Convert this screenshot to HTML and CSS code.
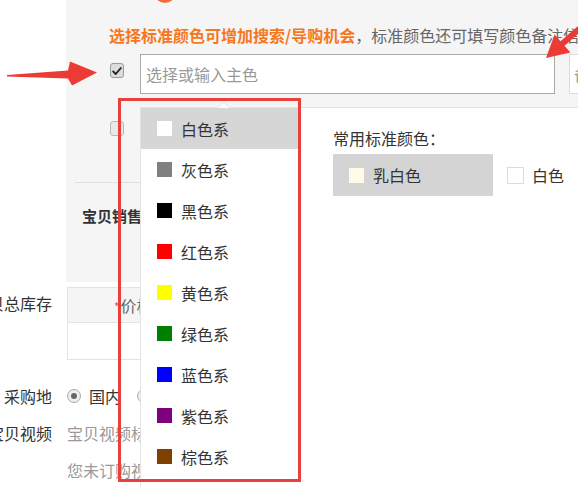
FILE: index.html
```html
<!DOCTYPE html>
<html lang="zh-CN">
<head>
<meta charset="utf-8">
<title>颜色选择</title>
<link rel="stylesheet" href="styles.css">
</head>
<body>
<div class="page">
  <div class="row">
    <div class="label"></div>
    <div class="panel">
      <p class="hint"><b>选择标准颜色可增加搜索/导购机会</b>，标准颜色还可填写颜色备注信息（偏深、偏亮等）</p>
      <div class="color-row">
        <span class="cb cb-on"><svg viewBox="0 0 14 14" width="12" height="12"><path d="M2.5 7.5 L5.5 10.5 L11.5 3.5" fill="none" stroke="#222" stroke-width="2.2" stroke-linecap="round" stroke-linejoin="round"/></svg></span>
        <div class="input main-input">选择或输入主色</div>
        <div class="input note-input">备注（如：偏深、偏浅等）</div>
      </div>
      <div class="color-row second">
        <span class="cb"></span>
      </div>
      <div class="divider"></div>
      <div class="sale-title">宝贝销售规格</div>
    </div>
  </div>

  <div class="row row-table">
    <div class="label"><span>宝贝总库存</span></div>
    <div class="table">
      <div class="thead"><span class="req">*</span>价格（元）</div>
      <div class="tbody"></div>
    </div>
  </div>

  <div class="row row-radio">
    <div class="label"><span>采购地</span></div>
    <div class="radios">
      <span class="radio on"></span><span class="radio-text">国内</span>
      <span class="radio second-radio"></span><span class="radio-text">海外及港澳台</span>
    </div>
  </div>

  <div class="row row-video">
    <div class="label"><span>宝贝视频</span></div>
    <div class="muted">宝贝视频标准：时长≤60秒</div>
  </div>
  <div class="row row-video">
    <div class="label"></div>
    <div class="muted">您未订购视频服务</div>
  </div>

  <span class="step-dot"></span>

  <div class="popup">
    <ul class="family-list">
      <li class="family active"><span class="sw" style="background:#ffffff"></span>白色系</li>
      <li class="family"><span class="sw" style="background:#808080"></span>灰色系</li>
      <li class="family"><span class="sw" style="background:#000000"></span>黑色系</li>
      <li class="family"><span class="sw" style="background:#ff0000"></span>红色系</li>
      <li class="family"><span class="sw" style="background:#ffff00"></span>黄色系</li>
      <li class="family"><span class="sw" style="background:#008000"></span>绿色系</li>
      <li class="family"><span class="sw" style="background:#0000ff"></span>蓝色系</li>
      <li class="family"><span class="sw" style="background:#800080"></span>紫色系</li>
      <li class="family"><span class="sw" style="background:#804000"></span>棕色系</li>
    </ul>
    <div class="std-panel">
      <div class="std-title">常用标准颜色：</div>
      <div class="std-options">
        <div class="std-opt selected"><span class="sw" style="background:#fffbe9"></span>乳白色</div>
        <div class="std-opt"><span class="sw sw-border" style="background:#ffffff"></span>白色</div>
      </div>
    </div>
  </div>

  <div class="redbox"></div>

  <svg class="arrows" viewBox="0 0 578 487" width="578" height="487">
    <polygon points="7,75 68,70.5 70,61.5 97,72.5 72,85.5 68,78.5 7,76.5" fill="#ec3a35"/>
    <polygon points="546,58 554.6,34.5 560.5,41.2 583,21.5 587,26 564.5,45.7 570.4,52.5" fill="#ec3a35"/>
  </svg>
</div>
</body>
</html>
```

FILE: styles.css
```css
* { box-sizing: border-box; }
html, body { margin: 0; padding: 0; }
body {
  width: 578px;
  height: 487px;
  overflow: hidden;
  background: #fff;
  font-family: "Noto Sans CJK SC", "Noto Sans", sans-serif;
  font-size: 16px;
  color: #333;
}
.page { position: relative; width: 578px; height: 487px; overflow: hidden; }

.row { display: flex; align-items: flex-start; gap: 14px; white-space: nowrap; }
.label {
  width: 52px;
  flex: none;
  display: flex;
  justify-content: flex-end;
  overflow: hidden;
  line-height: 20px;
  color: #333;
}
.label span { flex: none; }

/* grey panel */
.panel {
  flex: 1;
  min-width: 0;
  height: 282px;
  background: #f5f5f5;
  overflow: hidden;
}
.hint { margin: 25px 0 0 43px; line-height: 20px; color: #666; }
.hint b { color: #f5781f; }
.color-row { display: flex; margin: 9px 0 0 44px; height: 40px; }
.color-row > * { flex: none; }
.cb {
  width: 14px;
  height: 15px;
  margin-top: 9px;
  border: 1px solid #a9a9a9;
  border-radius: 3px;
  background: #e4e4e4;
  display: flex;
  align-items: center;
  justify-content: center;
}
.cb-on { background: #dcdcdc; border-color: #9a9a9a; }
.input {
  height: 40px;
  border: 1px solid #a9a9a9;
  background: #fff;
  line-height: 38px;
  padding-left: 5px;
  color: #999;
}
.main-input { width: 415px; margin-left: 16px; }
.note-input { width: 220px; margin-left: 14px; border-color: #dcdcdc; padding-left: 4px; }
.second { margin-top: 27px; height: 15px; }
.second .cb { margin-top: 0; background: #e8e8e8; border-color: #b8b8b8; }
.divider { margin: 46px 0 0 9px; height: 1px; background: #e0e0e0; }
.sale-title { margin: 23px 0 0 16px; line-height: 20px; font-size: 15px; font-weight: bold; color: #333; }

/* table */
.row-table { margin-top: 5px; }
.row-table .label { line-height: 32px; }
.table { flex: none; margin-left: 1px; width: 320px; border: 1px solid #e3e3e3; }
.thead {
  height: 35px;
  line-height: 34px;
  background: #f5f5f5;
  border-bottom: 1px solid #e3e3e3;
  padding-left: 46px;
  color: #666;
}
.req { color: #f2542d; font-size: 12px; margin-right: 1px; }
.tbody { height: 36px; background: #fff; }

/* radios */
.row-radio { margin-top: 26px; }
.radios { display: flex; align-items: center; height: 20px; margin-left: 1px; }
.radio {
  flex: none;
  width: 14px;
  height: 14px;
  border: 1px solid #aaa;
  border-radius: 50%;
  background: #eee;
  display: flex;
  align-items: center;
  justify-content: center;
}
.radio.on::after { content: ""; width: 6px; height: 6px; border-radius: 50%; background: #666; }
.radio-text { margin-left: 8px; line-height: 20px; }
.second-radio { margin-left: 16px; }

.row-video { margin-top: 17px; }
.muted { margin-left: 1px; line-height: 20px; color: #999; }

/* decoration */
.step-dot {
  position: absolute;
  left: 154px;
  top: -19px;
  width: 22px;
  height: 22px;
  border-radius: 50%;
  background: #f46b38;
}

/* popup */
.popup {
  position: absolute;
  left: 140px;
  top: 107px;
  width: 470px;
  height: 400px;
  background: #fff;
  border: 1px solid #e3e3e3;
  display: flex;
}
.popup::before {
  content: "";
  position: absolute;
  left: 78px;
  top: -5px;
  width: 8px;
  height: 8px;
  background: #fff;
  border-top: 1px solid #e3e3e3;
  border-left: 1px solid #e3e3e3;
  transform: rotate(45deg);
}
.family-list { list-style: none; margin: 0; padding: 0; width: 157px; flex: none; position: relative; }
.family {
  height: 41px;
  display: flex;
  align-items: center;
  padding-left: 16px;
  color: #333;
  white-space: nowrap;
}
.family.active { background: #d6d6d6; }
.sw { flex: none; width: 15px; height: 15px; margin-right: 9px; }
.sw-border { width: 17px; height: 17px; border: 1px solid #dcdcdc; margin-right: 8px; }

.std-panel { padding: 20px 0 0 35px; flex: 1; }
.std-title { line-height: 20px; color: #333; white-space: nowrap; }
.std-options { display: flex; margin-top: 6px; height: 42px; white-space: nowrap; }
.std-opt { display: flex; align-items: center; padding-left: 14px; }
.std-opt.selected { width: 160px; padding-left: 16px; background: #d4d4d4; }

.redbox {
  position: absolute;
  left: 118px;
  top: 98px;
  width: 183px;
  height: 384px;
  border: 3px solid #e8413d;
}
.arrows { position: absolute; left: 0; top: 0; pointer-events: none; }
```
